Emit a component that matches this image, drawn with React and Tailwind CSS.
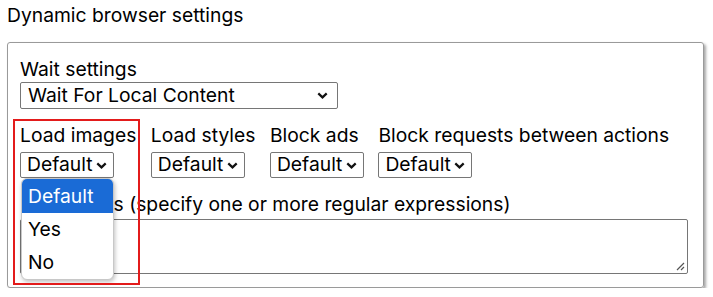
function Chevron() {
  return (
    <svg width="11" height="7" viewBox="0 0 11 7" className="shrink-0 ml-[2px]">
      <path d="M1.3 1.4 L5.5 5.4 L9.7 1.4" fill="none" stroke="#111" strokeWidth="2.2" />
    </svg>
  )
}

function FakeSelect({ value, className = '' }) {
  return (
    <div
      className={`flex items-center justify-between pl-[6px] pr-[6px] border border-[#767676] rounded-[2px] bg-white ${className}`}
    >
      <span className="leading-none whitespace-nowrap">{value}</span>
      <Chevron />
    </div>
  )
}

function Field({ label, gap, children }) {
  return (
    <div className={`flex flex-col ${gap}`}>
      <span className="leading-[24px] whitespace-nowrap">{label}</span>
      {children}
    </div>
  )
}

export default function App() {
  return (
    <div className="bg-white text-black text-[19.3px] px-[7px] pt-[3px]" style={{ fontFamily: 'Inter, "Noto Sans", sans-serif' }}>
      <h2 className="leading-[24px]">Dynamic browser settings</h2>

      <div className="mt-[15px] w-[697px] h-[246px] border border-[#9a9a9a] rounded-[3px] shadow-[2px_2px_3px_rgba(0,0,0,0.35)] pl-[12px] pt-[14px]">
        <Field label="Wait settings" gap="gap-[1px]">
          <FakeSelect value="Wait For Local Content" className="w-[318px] h-[27px] !pl-[7px] !pr-[9px]" />
        </Field>

        <div className="relative mt-[14px] flex gap-[14.5px]">
          <Field label="Load images" gap="gap-[5px]">
            <FakeSelect value="Default" className="w-[94px] h-[26px]" />
          </Field>
          <Field label="Load styles" gap="gap-[5px]">
            <FakeSelect value="Default" className="w-[94px] h-[26px]" />
          </Field>
          <Field label="Block ads" gap="gap-[5px]">
            <FakeSelect value="Default" className="w-[94px] h-[26px]" />
          </Field>
          <Field label="Block requests between actions" gap="gap-[5px]">
            <FakeSelect value="Default" className="w-[94px] h-[26px]" />
          </Field>

          {/* highlight around the open control */}
          <div className="absolute left-[-7px] top-[-4px] w-[127px] h-[166px] border-2 border-[#e31b1b] z-20 pointer-events-none" />

          {/* open dropdown list */}
          <div className="absolute left-[1px] top-[55px] w-[93px] rounded-[6px] border border-[#c8c8c8] bg-white shadow-[1px_2px_4px_rgba(0,0,0,0.25)] overflow-hidden z-10">
            <div className="h-[34px] flex items-center px-[6px] bg-[#1a6bd6] text-white">Default</div>
            <div className="h-[33px] flex items-center px-[6px]">Yes</div>
            <div className="h-[33px] flex items-center px-[6px]">No</div>
          </div>
        </div>

        <div className="mt-[14px] flex flex-col gap-[3px]">
          <span className="leading-[24px]">Block URLs (specify one or more regular expressions)</span>
          <div className="relative w-[668px] h-[55px] border border-[#767676] rounded-[2px]">
            <svg width="10" height="10" viewBox="0 0 10 10" className="absolute right-[2px] bottom-[2px]">
              <path d="M9 2 L2 9 M9 6 L6 9" stroke="#555" strokeWidth="1.2" />
            </svg>
          </div>
        </div>
      </div>
    </div>
  )
}
